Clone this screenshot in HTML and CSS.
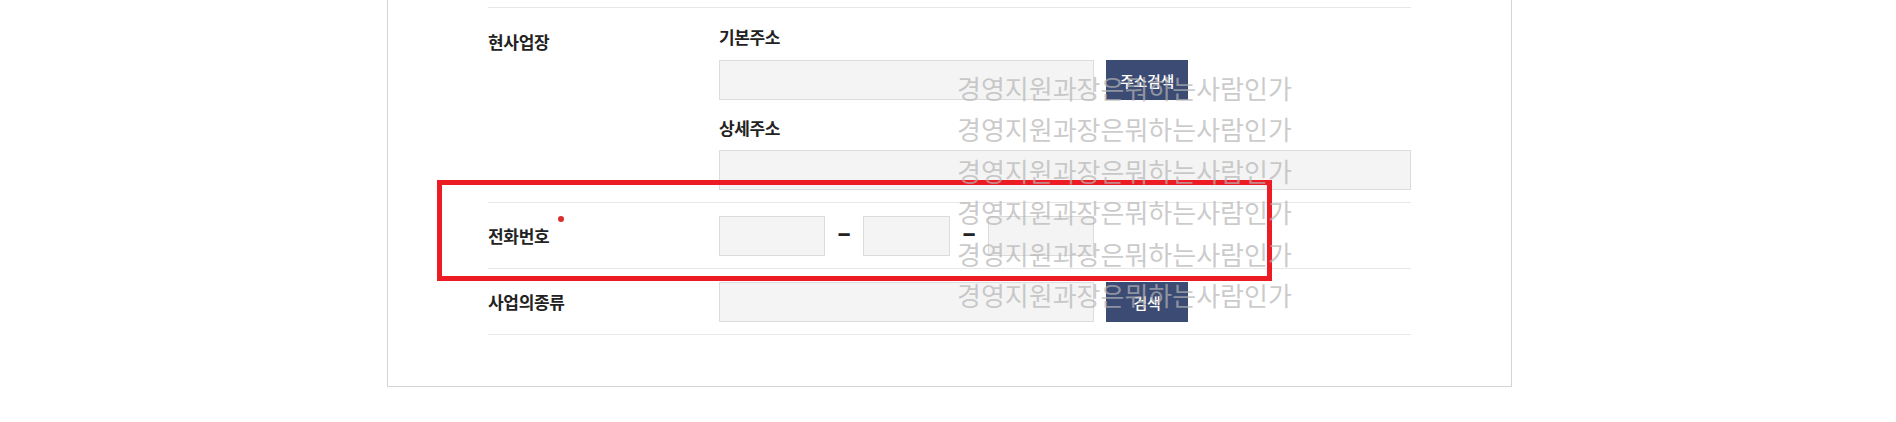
FILE: index.html
```html
<!DOCTYPE html>
<html lang="ko">
<head>
  <meta charset="UTF-8" />
  <meta name="viewport" content="width=device-width, initial-scale=1.0"/>
  <title>사업장 정보</title>
  <link rel="icon" href="data:,">
  <link rel="stylesheet" href="styles.css">
</head>
<body>
  <div class="panel">
    <div class="form">
      <div class="row row-address">
        <div class="label label-top">현사업장</div>
        <div class="field">
          <div class="sub-label">기본주소</div>
          <div class="inline">
            <input type="text" class="input input-addr" />
            <button class="btn">주소검색</button>
          </div>
          <div class="sub-label sub-label-next">상세주소</div>
          <input type="text" class="input input-full" />
        </div>
      </div>

      <div class="row">
        <div class="label"><span class="required">전화번호</span></div>
        <div class="field inline">
          <input type="text" class="input tel-wide" />
          <span class="dash">–</span>
          <input type="text" class="input tel-mid" />
          <span class="dash">–</span>
          <input type="text" class="input tel-wide" />
        </div>
      </div>

      <div class="row">
        <div class="label">사업의종류</div>
        <div class="field inline">
          <input type="text" class="input input-addr" />
          <button class="btn">검색</button>
        </div>
      </div>
    </div>

    <!-- highlight box drawn over the phone row -->
    <div class="highlight"></div>

    <div class="watermark">
      <p>경영지원과장은뭐하는사람인가</p>
      <p>경영지원과장은뭐하는사람인가</p>
      <p>경영지원과장은뭐하는사람인가</p>
      <p>경영지원과장은뭐하는사람인가</p>
      <p>경영지원과장은뭐하는사람인가</p>
      <p>경영지원과장은뭐하는사람인가</p>
    </div>
  </div>
</body>
</html>
```

FILE: styles.css
```css
:root {
  --navy: #3c4b74;
  --text: #222222;
  --line: #e8e8e8;
  --field-bg: #f4f4f4;
  --field-border: #dcdcdc;
  --red: #ed1c24;
}

* {
  box-sizing: border-box;
}

body {
  margin: 0;
  padding-left: 3px;
  background: #ffffff;
  color: var(--text);
  font-family: "Noto Sans CJK KR", "Noto Sans", sans-serif;
}

.panel {
  position: relative;
  width: 1125px;
  margin: 0 auto;
  padding: 7px 100px 51px;
  border: 1px solid #d4d4d4;
  border-top: 0;
}

.row {
  display: flex;
  align-items: center;
  padding: 13px 0 12px;
  border-bottom: 1px solid var(--line);
}

.row-address {
  align-items: flex-start;
  padding: 19px 0 12px;
  border-top: 1px solid var(--line);
}

.label {
  width: 231px;
  flex-shrink: 0;
  font-size: 17px;
  font-weight: 700;
  line-height: 20px;
  letter-spacing: -0.3px;
}

.label-top {
  margin-top: 5px;
}

.required {
  position: relative;
}

.required::after {
  content: "";
  position: absolute;
  left: calc(100% + 9px);
  top: -7px;
  width: 6px;
  height: 6px;
  border-radius: 50%;
  background: #dc2d2b;
}

.field {
  flex: 1;
}

.inline {
  display: flex;
  align-items: center;
}

.sub-label {
  font-size: 17px;
  font-weight: 700;
  line-height: 20px;
  letter-spacing: -0.4px;
  margin-bottom: 13px;
}

.sub-label-next {
  margin-top: 18px;
  margin-bottom: 12px;
}

.input {
  display: block;
  height: 40px;
  margin: 0;
  padding: 0 10px;
  background: var(--field-bg);
  border: 1px solid var(--field-border);
  outline: none;
  font-family: inherit;
  font-size: 14px;
}

.input-addr {
  width: 375px;
}

.input-full {
  width: 100%;
}

.tel-wide {
  width: 106px;
}

.tel-mid {
  width: 87px;
}

.dash {
  width: 38px;
  text-align: center;
  font-size: 25px;
  font-weight: 900;
  line-height: 20px;
  margin-top: -10px;
}

.btn {
  width: 82px;
  height: 40px;
  margin-left: 12px;
  padding: 0;
  border: none;
  background: var(--navy);
  color: #ffffff;
  font-family: inherit;
  font-size: 15px;
  font-weight: 500;
  letter-spacing: -0.3px;
  cursor: pointer;
}

.highlight {
  position: absolute;
  left: 49px;
  top: 180px;
  width: 835px;
  height: 101px;
  border: 5px solid var(--red);
}

.watermark {
  position: absolute;
  left: 569px;
  top: 67px;
  color: rgba(180, 180, 180, 0.7);
  font-size: 26px;
  line-height: 41.4px;
  white-space: nowrap;
  pointer-events: none;
}

.watermark p {
  margin: 0;
}
```
